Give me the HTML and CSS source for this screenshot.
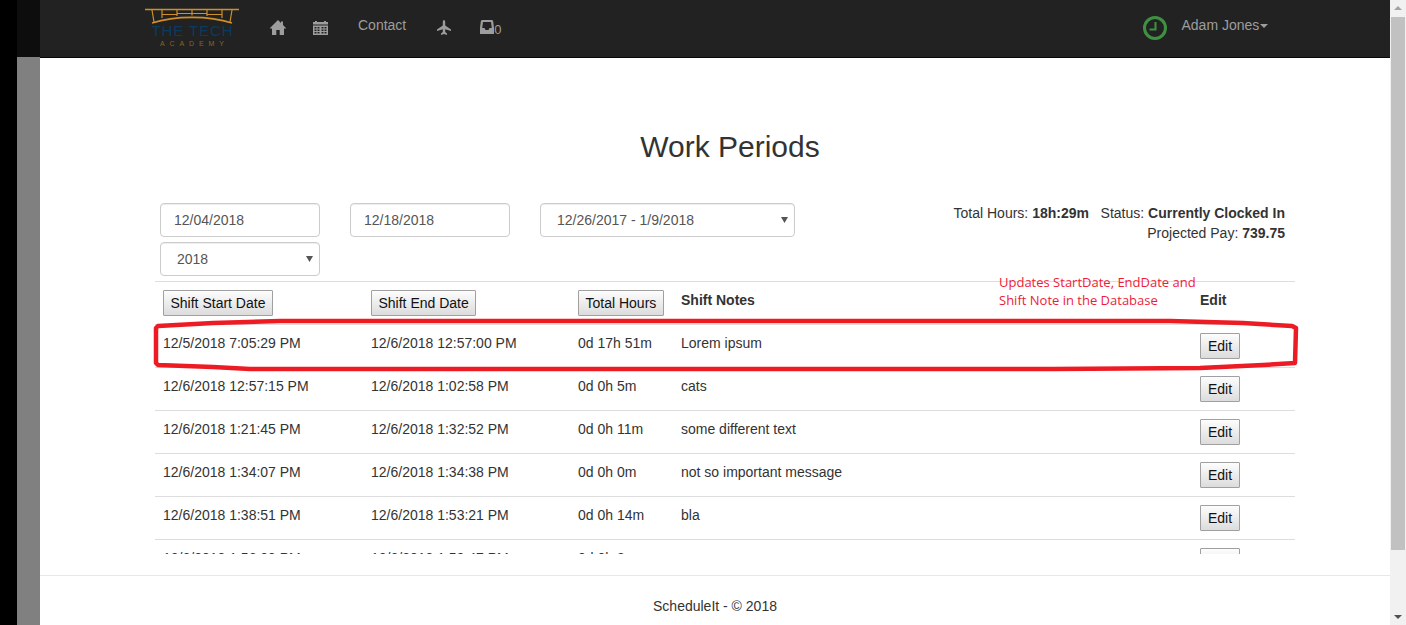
FILE: index.html
```html
<!DOCTYPE html>
<html lang="en">
<head>
<meta charset="utf-8">
<title>Work Periods</title>
<link rel="stylesheet" href="styles.css">
</head>
<body>
<div class="shell">
  <div class="edge-black"></div>
  <div class="edge-shade"><div class="shade-top"></div><div class="shade-bottom"></div></div>
  <div class="page">
    <nav class="navbar">
      <svg class="logo" viewBox="0 0 94 40" width="94" height="40" aria-label="The Tech Academy">
        <g fill="none" stroke="#d08f2a" stroke-width="1.200">
          <path stroke-width="1.300" d="M0 1.500H94"/>
          <path stroke-width="1.800" d="M7 15C30 7.500 64 7.500 87 15"/>
          <path d="M7 2L9 14M85 14L87 2M17 2V10M32 2V8M47 2V7.500M62 2V8M77 2V10M17 6.500H32M32 5.500H47M47 5.500H62M62 6.500H77"/>
        </g>
        <text class="logo-title" x="47" y="28" text-anchor="middle" textLength="81" lengthAdjust="spacing">THE TECH</text>
        <text class="logo-sub" x="47" y="38" text-anchor="middle" textLength="64" lengthAdjust="spacing">ACADEMY</text>
      </svg>
      <a class="nav-icon nav-home" href="#"><svg viewBox="0 0 16 15" width="16" height="15"><path fill="#9d9d9d" d="M8 0L11 3V1.500H13V5L16 8V8.500H14V15H9.700V10H6.300V15H2V8.500H0V8Z"/></svg></a>
      <a class="nav-icon nav-cal" href="#"><svg viewBox="0 0 15 14" width="15" height="14"><path fill="#9d9d9d" fill-rule="evenodd" d="M2 0H4V1H11V0H13V1H15V3.500H0V1H2ZM0 4.500H15V14H0ZM1.500 6V7.500H3.500V6ZM4.500 6V7.500H6.500V6ZM8.500 6V7.500H10.500V6ZM11.500 6V7.500H13.500V6ZM1.500 8.500V10H3.500V8.500ZM4.500 8.500V10H6.500V8.500ZM8.500 8.500V10H10.500V8.500ZM11.500 8.500V10H13.500V8.500ZM1.500 11V12.500H3.500V11ZM4.500 11V12.500H6.500V11ZM8.500 11V12.500H10.500V11ZM11.500 11V12.500H13.500V11Z"/></svg></a>
      <a class="nav-text nav-contact" href="#">Contact</a>
      <a class="nav-icon nav-plane" href="#"><svg viewBox="0 0 14 15" width="14" height="15"><path fill="#9d9d9d" d="M7 0C7.800 0 8.200 1 8.200 2.500V5.500L14 9.500V11L8.200 9.200V12L10 13.500V15L7 14L4 15V13.500L5.800 12V9.200L0 11V9.500L5.800 5.500V2.500C5.800 1 6.200 0 7 0Z"/></svg></a>
      <a class="nav-icon nav-inbox" href="#"><svg viewBox="0 0 14 14" width="14" height="14"><path fill="#9d9d9d" fill-rule="evenodd" d="M2.500 0H11.500C12.500 0 13 .5 13.200 1.500L14 8V14H0V8L.8 1.500C1 .5 1.500 0 2.500 0ZM3 2L2.200 8H4.500L5.500 10H8.500L9.500 8H11.800L11 2Z"/></svg><span class="inbox-count">0</span></a>
      <svg class="clock" viewBox="0 0 24 24" width="24" height="24"><circle cx="12" cy="12" r="10.500" fill="none" stroke="#3f9142" stroke-width="3"/><path fill="none" stroke="#3f9142" stroke-width="2" d="M12.500 6V13.500H6.500"/></svg>
      <a class="nav-text nav-user" href="#">Adam Jones<span class="caret"></span></a>
    </nav>

    <main class="content">
      <h2 class="title">Work Periods</h2>
      <div class="toolbar">
        <div class="filters">
          <input class="control control-date" type="text" value="12/04/2018">
          <input class="control control-date" type="text" value="12/18/2018">
          <select class="control control-select control-period"><option>12/26/2017 - 1/9/2018</option></select>
          <select class="control control-select control-date"><option>2018</option></select>
        </div>
        <div class="summary">
          <div>Total Hours: <b>18h:29m</b> &nbsp; Status: <b>Currently Clocked In</b></div>
          <div>Projected Pay: <b>739.75</b></div>
        </div>
      </div>
      <div class="table-wrap">
        <table class="shifts">
          <colgroup><col class="c1"><col class="c2"><col class="c3"><col class="c4"><col class="c5"></colgroup>
          <thead>
            <tr>
              <th><button class="btn">Shift Start Date</button></th>
              <th><button class="btn">Shift End Date</button></th>
              <th><button class="btn">Total Hours</button></th>
              <th>Shift Notes</th>
              <th>Edit</th>
            </tr>
          </thead>
          <tbody>
            <tr><td>12/5/2018 7:05:29 PM</td><td>12/6/2018 12:57:00 PM</td><td>0d 17h 51m</td><td>Lorem ipsum</td><td><button class="btn btn-edit">Edit</button></td></tr>
            <tr><td>12/6/2018 12:57:15 PM</td><td>12/6/2018 1:02:58 PM</td><td>0d 0h 5m</td><td>cats</td><td><button class="btn btn-edit">Edit</button></td></tr>
            <tr><td>12/6/2018 1:21:45 PM</td><td>12/6/2018 1:32:52 PM</td><td>0d 0h 11m</td><td>some different text</td><td><button class="btn btn-edit">Edit</button></td></tr>
            <tr><td>12/6/2018 1:34:07 PM</td><td>12/6/2018 1:34:38 PM</td><td>0d 0h 0m</td><td>not so important message</td><td><button class="btn btn-edit">Edit</button></td></tr>
            <tr><td>12/6/2018 1:38:51 PM</td><td>12/6/2018 1:53:21 PM</td><td>0d 0h 14m</td><td>bla</td><td><button class="btn btn-edit">Edit</button></td></tr>
            <tr><td>12/6/2018 1:56:09 PM</td><td>12/6/2018 1:59:47 PM</td><td>0d 0h 3m</td><td></td><td><button class="btn btn-edit">Edit</button></td></tr>
          </tbody>
        </table>
      </div>
    </main>

    <footer class="footer">ScheduleIt - © 2018</footer>

    <div class="note">Updates StartDate, EndDate and<br>Shift Note in the Database</div>
    <svg class="ring" viewBox="0 0 1150 60" width="1150" height="60"><path fill="none" stroke="#ed1c24" stroke-width="4.500" stroke-linejoin="round" d="M3 11L5 9L60 6L127 4H1017L1090 6L1139 9L1143 11L1142 46L1110 48L1047 51L900 52H97L60 50L5 48L3 46Z"/></svg>
  </div>
  <div class="scrollbar">
    <span class="arrow-up"></span>
    <div class="thumb"></div>
    <span class="arrow-down"></span>
  </div>
</div>
</body>
</html>
```
FILE: styles.css
```css
html, body {
  margin: 0;
  height: 100%;
  overflow: hidden;
}
body {
  font-family: "Liberation Sans", Arial, sans-serif;
  font-size: 14px;
  line-height: 20px;
  color: #333;
  background: #fff;
}
.shell {
  display: flex;
  height: 625px;
}
.edge-black {
  width: 17px;
  background: #000;
}
.edge-shade {
  width: 23px;
  display: flex;
  flex-direction: column;
}
.shade-top {
  height: 57px;
  background: #0d0d0d;
}
.shade-bottom {
  flex: 1;
  background: #808080;
}
.page {
  position: relative;
  width: 1350px;
  display: flex;
  flex-direction: column;
}
.navbar {
  flex: none;
  display: flex;
  align-items: center;
  box-sizing: border-box;
  height: 58px;
  padding-left: 105px;
  background: #222;
  border-bottom: 1px solid #080808;
}
.navbar a {
  color: #9d9d9d;
  text-decoration: none;
}
.logo {
  flex: none;
  display: block;
  margin-top: -2px;
}
.logo-title {
  font-family: "Liberation Sans", Arial, sans-serif;
  font-size: 15px;
  fill: #0b3a60;
}
.logo-sub {
  font-family: "Liberation Sans", Arial, sans-serif;
  font-size: 7px;
  fill: #8a6420;
}
.nav-icon {
  display: flex;
  align-items: center;
  margin-top: -3px;
}
.nav-icon svg {
  display: block;
}
.nav-text {
  margin-top: -7px;
}
.nav-home { margin-left: 31px; }
.nav-cal { margin-left: 27px; margin-top: -2px; }
.nav-contact { margin-left: 30px; }
.nav-plane { margin-left: 31px; }
.nav-inbox { margin-left: 29px; }
.inbox-count {
  font-size: 13px;
  line-height: 14px;
  margin-top: 5px;
}
.clock {
  margin-left: 642px;
  margin-top: -1px;
}
.nav-user {
  margin-left: 14px;
}
.caret {
  display: inline-block;
  width: 0;
  height: 0;
  margin-left: 1px;
  vertical-align: middle;
  border-top: 4px solid #9d9d9d;
  border-left: 4px solid transparent;
  border-right: 4px solid transparent;
}
.content {
  flex: 1;
  min-height: 0;
  overflow: hidden;
  padding: 72px 105px 0;
}
.title {
  margin: 0 0 40px;
  padding-left: 30px;
  font-size: 30px;
  line-height: 33px;
  font-weight: 500;
  text-align: center;
}
.toolbar {
  display: flex;
  justify-content: space-between;
  padding-left: 15px;
  margin-bottom: 5px;
  height: 73px;
}
.filters {
  width: 635px;
  display: flex;
  flex-wrap: wrap;
  column-gap: 30px;
  row-gap: 5px;
  align-content: flex-start;
}
.control {
  box-sizing: border-box;
  height: 34px;
  padding: 6px 13px;
  font: inherit;
  color: #555;
  background-color: #fff;
  border: 1px solid #ccc;
  border-radius: 4px;
  box-shadow: inset 0 1px 1px rgba(0,0,0,.075);
}
.control-select {
  appearance: none;
  padding-left: 16px;
  background-image: url("data:image/svg+xml,%3Csvg xmlns='http://www.w3.org/2000/svg' width='7' height='6'%3E%3Cpath d='M0 0H7L3.500 6Z' fill='%23555'/%3E%3C/svg%3E");
  background-repeat: no-repeat;
  background-position: right 6px center;
}
.control-date { width: 160px; }
.control-period { width: 255px; }
.summary {
  text-align: right;
  color: #333;
}
.table-wrap {
  width: 1140px;
  height: 273px;
  margin-left: 10px;
  overflow: hidden;
}
.shifts {
  width: 1140px;
  table-layout: fixed;
  border-collapse: collapse;
  border-spacing: 0;
}
.c1 { width: 208px; }
.c2 { width: 207px; }
.c3 { width: 103px; }
.c4 { width: 519px; }
.c5 { width: 103px; }
.shifts th, .shifts td {
  padding: 8px;
  text-align: left;
  vertical-align: top;
  border-top: 1px solid #ddd;
}
.shifts th { font-weight: 700; }
.btn {
  box-sizing: border-box;
  height: 26px;
  padding: 1px 6.500px;
  font: 14px/20px "Liberation Sans", Arial, sans-serif;
  color: #111;
  background: linear-gradient(#fdfdfd, #dcdcdc);
  border: 1px solid #a0a0a0;
  border-radius: 1px;
  vertical-align: top;
}
.btn-edit { width: 40px; }
.footer {
  flex: none;
  height: 50px;
  box-sizing: border-box;
  padding-top: 20px;
  border-top: 1px solid #e7e7e7;
  text-align: center;
}
.note {
  position: absolute;
  left: 959px;
  top: 273px;
  font-family: "Open Sans", "Noto Sans", sans-serif;
  font-size: 13px;
  line-height: 18px;
  color: #ed1c3a;
  white-space: nowrap;
}
.ring {
  position: absolute;
  left: 113px;
  top: 317px;
  pointer-events: none;
}
.scrollbar {
  flex: 1;
  position: relative;
  background: #f1f1f1;
}
.thumb {
  position: absolute;
  left: 1px;
  right: 1px;
  top: 17px;
  height: 533px;
  background: #c1c1c1;
}
.arrow-up, .arrow-down {
  position: absolute;
  left: 4px;
  width: 0;
  height: 0;
  border-left: 4px solid transparent;
  border-right: 4px solid transparent;
}
.arrow-up {
  top: 6px;
  border-bottom: 4px solid #a3a3a3;
}
.arrow-down {
  bottom: 6px;
  border-top: 4px solid #505050;
}
```
